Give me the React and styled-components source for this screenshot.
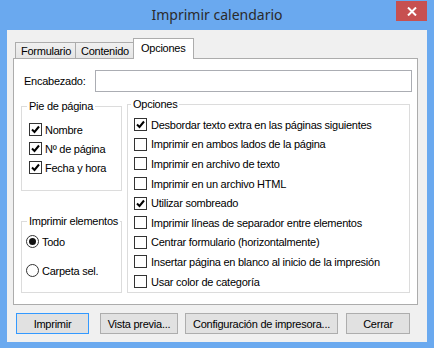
import React from "react";
import styled, { createGlobalStyle } from "styled-components";

const GlobalStyle = createGlobalStyle`
  html, body {
    margin: 0;
    padding: 0;
    background: #6aa9ef;
  }
  * {
    box-sizing: border-box;
  }
`;

const Window = styled.div`
  width: 434px;
  height: 348px;
  background: #6aa9ef;
  padding: 0 7px 6px 7px;
  display: flex;
  flex-direction: column;
  font-family: "Liberation Sans", Arial, sans-serif;
  font-size: 11px;
  letter-spacing: -0.25px;
  color: #000;
`;

const TitleBar = styled.div`
  height: 30px;
  display: grid;
  grid-template-columns: 31px 1fr 31px;
  align-items: start;
`;

const Title = styled.div`
  grid-column: 2;
  text-align: center;
  font-family: "Noto Sans", "Open Sans", sans-serif;
  font-size: 14px;
  letter-spacing: 0;
  line-height: 30px;
  color: #2b2b2b;
`;

const CloseButton = styled.div`
  grid-column: 3;
  margin-top: 1px;
  height: 20px;
  background: #c75050;
  display: flex;
  align-items: center;
  justify-content: center;
`;

const Client = styled.div`
  flex: 1;
  background: #f0f0f0;
  padding: 8px 9px 8px 6px;
  display: flex;
  flex-direction: column;
`;

const TabStrip = styled.div`
  display: flex;
  align-items: flex-end;
  height: 21px;
  padding-left: 2px;
  margin-bottom: -1px;
  position: relative;
  z-index: 1;
`;

const Tab = styled.div`
  width: ${(p) => p.$w};
  height: ${(p) => (p.$active ? "21px" : "17px")};
  padding: ${(p) => (p.$active ? "2px 0 0 7px" : "1px 0 0 5px")};
  margin-left: -1px;
  border: 1px solid #acacac;
  border-bottom: ${(p) => (p.$active ? "none" : "1px solid #acacac")};
  background: ${(p) =>
    p.$active ? "#ffffff" : "linear-gradient(#f0f0f0, #e5e5e5)"};
  line-height: 14px;
  white-space: nowrap;
  &:first-child {
    margin-left: 0;
  }
`;

const Panel = styled.div`
  height: 247px;
  background: #ffffff;
  border: 1px solid #acacac;
  display: flex;
  flex-direction: column;
`;

const HeaderRow = styled.div`
  display: grid;
  grid-template-columns: 71px 1fr;
  align-items: center;
  margin: 11px 5px 0 10px;
`;

const Label = styled.label`
  white-space: nowrap;
`;

const TextInput = styled.input`
  height: 22px;
  border: 1px solid #abadb3;
  background: #fff;
  font: inherit;
  outline: none;
`;

const Body = styled.div`
  display: grid;
  grid-template-columns: 101px 283px;
  column-gap: 5px;
  margin: 6px 0 0 7px;
`;

const LeftColumn = styled.div`
  display: flex;
  flex-direction: column;
  padding-top: 2px;
`;

const Group = styled.fieldset`
  margin: 0;
  margin-top: ${(p) => p.$mt || "0"};
  border: 1px solid #dcdcdc;
  padding: ${(p) => p.$pad};
  min-width: 0;
  height: ${(p) => p.$h};
`;

const Legend = styled.legend`
  margin-left: ${(p) => p.$ml || "0"};
  padding: 0 2px;
  line-height: 13px;
  white-space: nowrap;
`;

const Row = styled.div`
  display: flex;
  align-items: center;
  height: ${(p) => p.$h || "19px"};
  margin-top: ${(p) => p.$mt || "0"};
  gap: ${(p) => p.$gap || "3px"};
  white-space: nowrap;
`;

const Box = styled.span`
  width: 13px;
  height: 13px;
  flex: none;
  border: 1px solid #333;
  background: #fff;
  display: flex;
  align-items: center;
  justify-content: center;
`;

const Radio = styled.span`
  width: 13px;
  height: 13px;
  flex: none;
  border: 1px solid #333;
  border-radius: 50%;
  background: #fff;
  display: flex;
  align-items: center;
  justify-content: center;
  &::after {
    content: "";
    display: ${(p) => (p.$on ? "block" : "none")};
    width: 7px;
    height: 7px;
    border-radius: 50%;
    background: #111;
  }
`;

const ButtonRow = styled.div`
  display: flex;
  margin-top: 8px;
  padding-left: 3px;
`;

const Button = styled.div`
  width: ${(p) => p.$w};
  margin-left: ${(p) => p.$ml || "0"};
  height: 21px;
  border: 1px solid ${(p) => (p.$default ? "#3399ff" : "#adadad")};
  background: #e1e1e1;
  display: flex;
  align-items: center;
  justify-content: center;
  white-space: nowrap;
`;

const Check = ({ on }) => (
  <Box>
    {on && (
      <svg width="9" height="9" viewBox="0 0 9 9">
        <path d="M1 4.5 L3.5 7 L8 1.5" stroke="#000" strokeWidth="2" fill="none" />
      </svg>
    )}
  </Box>
);

const CheckRow = ({ on, children, h, gap }) => (
  <Row $h={h} $gap={gap}>
    <Check on={on} />
    <span>{children}</span>
  </Row>
);

const opciones = [
  ["Desbordar texto extra en las páginas siguientes", true],
  ["Imprimir en ambos lados de la página", false],
  ["Imprimir en archivo de texto", false],
  ["Imprimir en un archivo HTML", false],
  ["Utilizar sombreado", true],
  ["Imprimir líneas de separador entre elementos", false],
  ["Centrar formulario (horizontalmente)", false],
  ["Insertar página en blanco al inicio de la impresión", false],
  ["Usar color de categoría", false],
];

export default function App() {
  return (
    <>
      <GlobalStyle />
      <Window>
        <TitleBar>
          <Title>Imprimir calendario</Title>
          <CloseButton>
            <svg width="10" height="9" viewBox="0 0 10 9">
              <path d="M1 0.5 L9 8.5 M9 0.5 L1 8.5" stroke="#fff" strokeWidth="2" />
            </svg>
          </CloseButton>
        </TitleBar>
        <Client>
          <TabStrip>
            <Tab $w="61px">Formulario</Tab>
            <Tab $w="59px">Contenido</Tab>
            <Tab $w="61px" $active>Opciones</Tab>
          </TabStrip>
          <Panel>
            <HeaderRow>
              <Label>Encabezado:</Label>
              <TextInput />
            </HeaderRow>
            <Body>
              <LeftColumn>
                <Group $pad="7px 0 0 7px" $h="91px">
                  <Legend $ml="-2px">Pie de página</Legend>
                  <CheckRow on>Nombre</CheckRow>
                  <CheckRow on>Nº de página</CheckRow>
                  <CheckRow on>Fecha y hora</CheckRow>
                </Group>
                <Group $pad="4px 0 0 4px" $h="78px" $mt="24px">
                  <Legend $ml="1px">Imprimir elementos</Legend>
                  <Row>
                    <Radio $on />
                    <span>Todo</span>
                  </Row>
                  <Row $mt="10px">
                    <Radio />
                    <span>Carpeta sel.</span>
                  </Row>
                </Group>
              </LeftColumn>
              <Group $pad="4px 0 0 6px" $h="195px">
                <Legend $ml="-3px">Opciones</Legend>
                {opciones.map(([text, on]) => (
                  <CheckRow key={text} on={on} h="19.6px" gap="4px">
                    {text}
                  </CheckRow>
                ))}
              </Group>
            </Body>
          </Panel>
          <ButtonRow>
            <Button $w="73px" $default>Imprimir</Button>
            <Button $w="78px" $ml="11px">Vista previa...</Button>
            <Button $w="153px" $ml="7px">Configuración de impresora...</Button>
            <Button $w="64px" $ml="8px">Cerrar</Button>
          </ButtonRow>
        </Client>
      </Window>
    </>
  );
}
